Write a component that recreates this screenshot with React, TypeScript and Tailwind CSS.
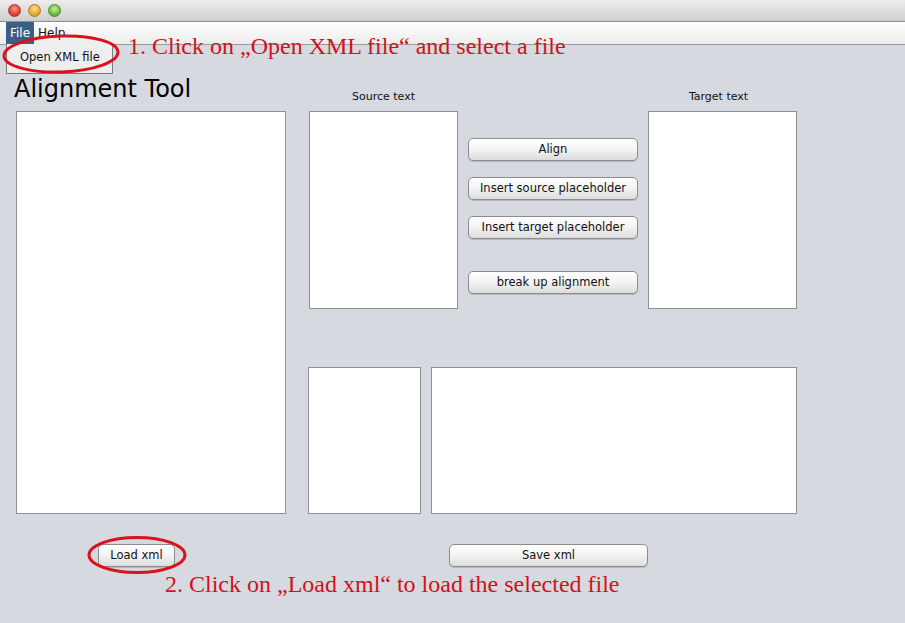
import React from "react";

const ui = { fontFamily: '"DejaVu Sans", "Noto Sans", sans-serif' };
const serif = { fontFamily: '"Liberation Serif", "Times New Roman", serif' };

function AquaButton({ label, className = "" }: { label: string; className?: string }) {
  return (
    <div
      className={`h-[23px] flex items-center justify-center rounded-[5px] border border-[#8c8c8c] bg-gradient-to-b from-[#ffffff] via-[#f3f3f3] to-[#dcdcdc] shadow-[0_1px_0_rgba(0,0,0,0.15)] text-[11.5px] text-[#111] ${className}`}
    >
      {label}
    </div>
  );
}

export default function App() {
  return (
    <div className="relative w-[905px] h-[623px] overflow-hidden bg-[#d6d9df] text-[#111]" style={ui}>
      {/* Title bar */}
      <div className="h-[22px] bg-gradient-to-b from-[#ededed] to-[#cfcfcf] border-b border-[#8d8d8d] flex items-center gap-[7px] pl-[8px]">
        <span className="w-[13px] h-[13px] rounded-full bg-[radial-gradient(circle_at_50%_35%,#ff9a8f,#d8342a_70%)] border border-[#a8352c]" />
        <span className="w-[13px] h-[13px] rounded-full bg-[radial-gradient(circle_at_50%_35%,#ffe08a,#e0a024_70%)] border border-[#b07a1c]" />
        <span className="w-[13px] h-[13px] rounded-full bg-[radial-gradient(circle_at_50%_35%,#c8f08c,#5fb23a_70%)] border border-[#4b8a2d]" />
      </div>
      {/* Menu bar */}
      <div className="h-[23px] bg-gradient-to-b from-[#ffffff] to-[#ececec] border-b border-[#9a9ca2] flex items-stretch pl-[6px] text-[12px]">
        <div className="px-[4px] flex items-center bg-[#3b6088] text-white">File</div>
        <div className="px-[4px] flex items-center text-[#111]">Help</div>
      </div>

      {/* Main content */}
      <div className="flex pl-[16px]">
        {/* Left column */}
        <div className="flex flex-col w-[270px]">
          <div className="h-[66px] flex items-end pb-[8px] -ml-[2px] text-[24px] leading-[28px] text-black">
            Alignment Tool
          </div>
          <div className="h-[403px] bg-white border border-[#8f9095]" />
        </div>

        {/* Right area */}
        <div className="flex flex-col ml-[23px]">
          <div className="h-[66px] flex items-end pb-[6px] text-[11px]">
            <div className="w-[149px] text-center">Source text</div>
            <div className="w-[190px]" />
            <div className="w-[149px] text-center pr-[8px]">Target text</div>
          </div>
          <div className="flex h-[198px]">
            <div className="w-[149px] bg-white border border-[#8f9095]" />
            <div className="w-[170px] mx-[10px] flex flex-col pt-[27px]">
              <AquaButton label="Align" />
              <AquaButton label="Insert source placeholder" className="mt-[16px]" />
              <AquaButton label="Insert target placeholder" className="mt-[16px]" />
              <AquaButton label="break up alignment" className="mt-[32px]" />
            </div>
            <div className="w-[149px] bg-white border border-[#8f9095]" />
          </div>
          <div className="flex h-[147px] mt-[58px] -ml-[1px]">
            <div className="w-[113px] bg-white border border-[#8f9095]" />
            <div className="w-[366px] ml-[10px] bg-white border border-[#8f9095]" />
          </div>
        </div>
      </div>

      {/* Bottom buttons */}
      <div className="flex mt-[30px]">
        <AquaButton label="Load xml" className="ml-[98px] w-[77px] rounded-[3px]" />
        <AquaButton label="Save xml" className="ml-[274px] w-[199px]" />
      </div>

      {/* Dropdown menu overlay */}
      <div className="absolute left-[6px] top-[44px] w-[107px] h-[30px] bg-[#eeeeee] border border-[#7a7a7a] border-t-0 text-[11.5px] flex items-center pl-[13px] pb-[2px]">
        Open XML file
      </div>

      {/* Annotations */}
      <svg className="absolute left-0 top-0 pointer-events-none" width="905" height="623">
        <ellipse cx="61" cy="54" rx="57" ry="18" fill="none" stroke="#d9121c" strokeWidth="3" transform="rotate(-2 61 54)" />
        <ellipse cx="137" cy="555" rx="48" ry="17.5" fill="none" stroke="#d9121c" strokeWidth="3" />
      </svg>
      <div className="absolute left-[128px] top-[31px] text-[24px] leading-[30px] text-[#d1121c] whitespace-nowrap" style={serif}>
        1. Click on „Open XML file“ and select a file
      </div>
      <div className="absolute left-[165px] top-[569px] text-[24px] leading-[30px] text-[#d1121c] whitespace-nowrap" style={serif}>
        2. Click on „Load xml“ to load the selected file
      </div>
    </div>
  );
}
